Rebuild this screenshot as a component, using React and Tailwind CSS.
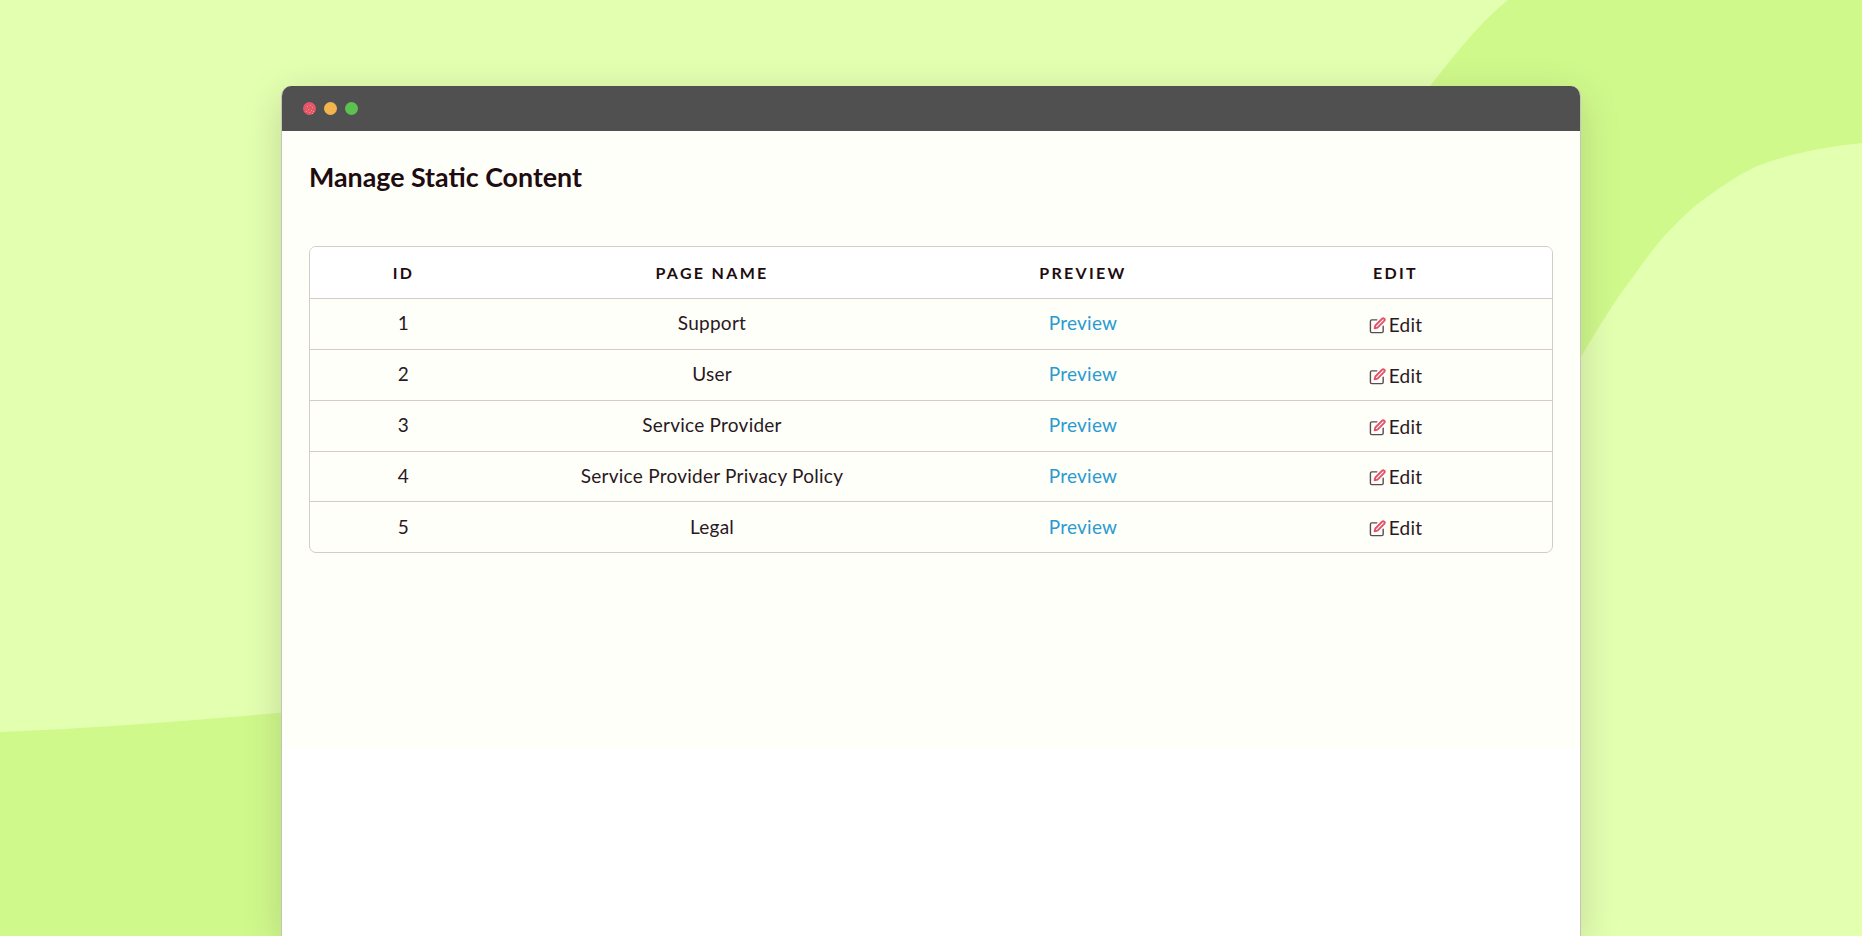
const rows = [
  { id: 1, name: "Support" },
  { id: 2, name: "User" },
  { id: 3, name: "Service Provider" },
  { id: 4, name: "Service Provider Privacy Policy" },
  { id: 5, name: "Legal" },
];

function EditIcon() {
  return (
    <svg width="17" height="17" viewBox="0 0 24 24" fill="none" strokeWidth="2" strokeLinecap="round" strokeLinejoin="round" className="shrink-0">
      <path d="M11 4H4a2 2 0 0 0-2 2v14a2 2 0 0 0 2 2h14a2 2 0 0 0 2-2v-7" stroke="#5c4a52" />
      <path d="M18.5 2.5a2.121 2.121 0 0 1 3 3L12 15l-4 1 1-4 9.5-9.5z" stroke="#e2536b" strokeWidth="2.7" />
    </svg>
  );
}

function RedDot() {
  const specks = [[4, 4], [7, 3], [9, 5], [5, 7], [8, 8], [10, 9], [3, 9], [6, 10], [9, 11]];
  return (
    <svg width="13" height="13" viewBox="0 0 13 13">
      <circle cx="6.5" cy="6.5" r="6.5" fill="#e5566c" />
      {specks.map(([x, y]) => (
        <rect key={`${x}-${y}`} x={x} y={y} width="1" height="1" fill="#f0a060" />
      ))}
    </svg>
  );
}

export default function App() {
  return (
    <div className="relative h-[936px] overflow-hidden bg-[#e3ffb0] font-['Lato','Open_Sans',sans-serif] text-[#200c10]">
      <svg className="absolute inset-0" width="1862" height="936" viewBox="0 0 1862 936">
        <path d="M1508 0 C1480 22 1452 58 1431 85 L1400 400 L1581 357 C1600 325 1615 300 1633 277 C1645 260 1655 246 1667 233 C1680 220 1692 207 1707 197 C1722 186 1737 176 1753 168 C1786 154 1825 147 1862 143 L1862 0 Z" fill="#d0f98c" />
        <path d="M0 732 C100 728 200 720 300 711 L300 936 L0 936 Z" fill="#d0f98c" />
      </svg>

      <div className="relative mx-auto mt-[86px] flex h-[850px] w-[1300px] flex-col overflow-hidden rounded-t-[10px] border-x border-[#c4c4bc] bg-white shadow-[0_10px_40px_rgba(0,0,0,0.15)]">
        <div className="flex h-[45px] shrink-0 items-center gap-[8px] bg-[#505050] pl-[21px]">
          <RedDot />
          <span className="h-[13px] w-[13px] rounded-full bg-[#f2b54e]" />
          <span className="h-[13px] w-[13px] rounded-full bg-[#5cc151]" />
        </div>

        <div className="h-[617px] bg-[#fffffa] px-[27px] pt-[29px]">
          <h1 className="text-[26.8px] leading-[34px] font-bold">Manage Static Content</h1>

          <div className="mt-[52px] w-[1244px] overflow-hidden rounded-[7px] border border-[#d5cbcb]">
            <table className="w-full table-fixed border-collapse text-center">
              <thead className="bg-white">
                <tr className="h-[51px] text-[16px] font-bold tracking-[0.145em]">
                  <th className="w-[187px] pt-[1px]">ID</th>
                  <th className="w-[430px] pt-[1px]">PAGE NAME</th>
                  <th className="w-[312px] pt-[1px]">PREVIEW</th>
                  <th className="pt-[1px]">EDIT</th>
                </tr>
              </thead>
              <tbody className="text-[19px] tracking-[0.25px] text-[#2a1822]">
                {rows.map((row) => (
                  <tr key={row.id} className={`${row.id === 4 ? "h-[50px]" : "h-[51px]"} border-t border-[#d5cbcb]`}>
                    <td>{row.id}</td>
                    <td>{row.name}</td>
                    <td>
                      <a className="text-[#2a9bd0]">Preview</a>
                    </td>
                    <td>
                      <span className="inline-flex items-center gap-[3px] pt-[5px]">
                        <EditIcon />
                        Edit
                      </span>
                    </td>
                  </tr>
                ))}
              </tbody>
            </table>
          </div>
        </div>
      </div>
    </div>
  );
}
